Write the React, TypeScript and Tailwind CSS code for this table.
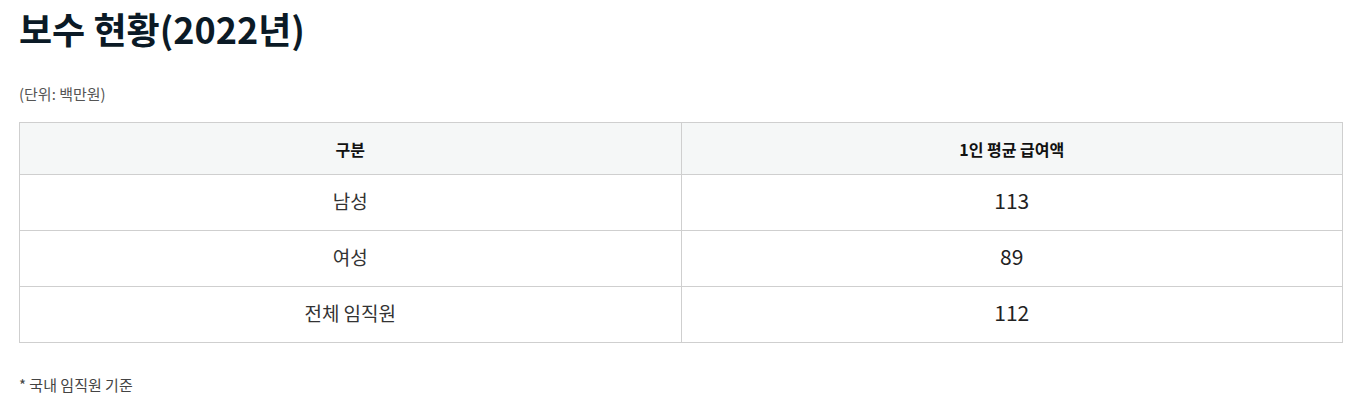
import React from 'react';

const rows = [
    { label: '남성', value: '113' },
    { label: '여성', value: '89' },
    { label: '전체 임직원', value: '112' },
];

const App: React.FC = () => {
    return (
        <div className="min-h-screen bg-white px-[19px] pt-[7px] font-['Noto_Sans_CJK_KR','Noto_Sans',sans-serif]">
            {/* TITLE */}
            <h1 className="text-[36px] font-bold leading-[42px] text-[#0b1a26]">보수 현황(2022년)</h1>

            <p className="mt-[35px] text-[15px] leading-[20px] text-[#555]">(단위: 백만원)</p>

            {/* TABLE */}
            <table className="mt-[18px] w-full border-collapse border border-[#cfcfcf] text-center">
                <thead>
                    <tr className="bg-[#f5f7f7]">
                        <th className="h-[52px] w-1/2 border border-[#cfcfcf] text-[16px] font-bold text-[#111]">구분</th>
                        <th className="h-[52px] w-1/2 border border-[#cfcfcf] text-[16px] font-bold text-[#111]">1인 평균 급여액</th>
                    </tr>
                </thead>
                <tbody>
                    {rows.map((row) => (
                        <tr key={row.label}>
                            <td className="h-[56px] border border-[#cfcfcf] pb-[3px] text-[19px] text-[#333]">{row.label}</td>
                            <td className="h-[56px] border border-[#cfcfcf] pb-[3px] text-[21px] text-[#222]">{row.value}</td>
                        </tr>
                    ))}
                </tbody>
            </table>

            <p className="mt-[32px] text-[15px] leading-[20px] text-[#444]">* 국내 임직원 기준</p>
        </div>
    );
};

export default App;
